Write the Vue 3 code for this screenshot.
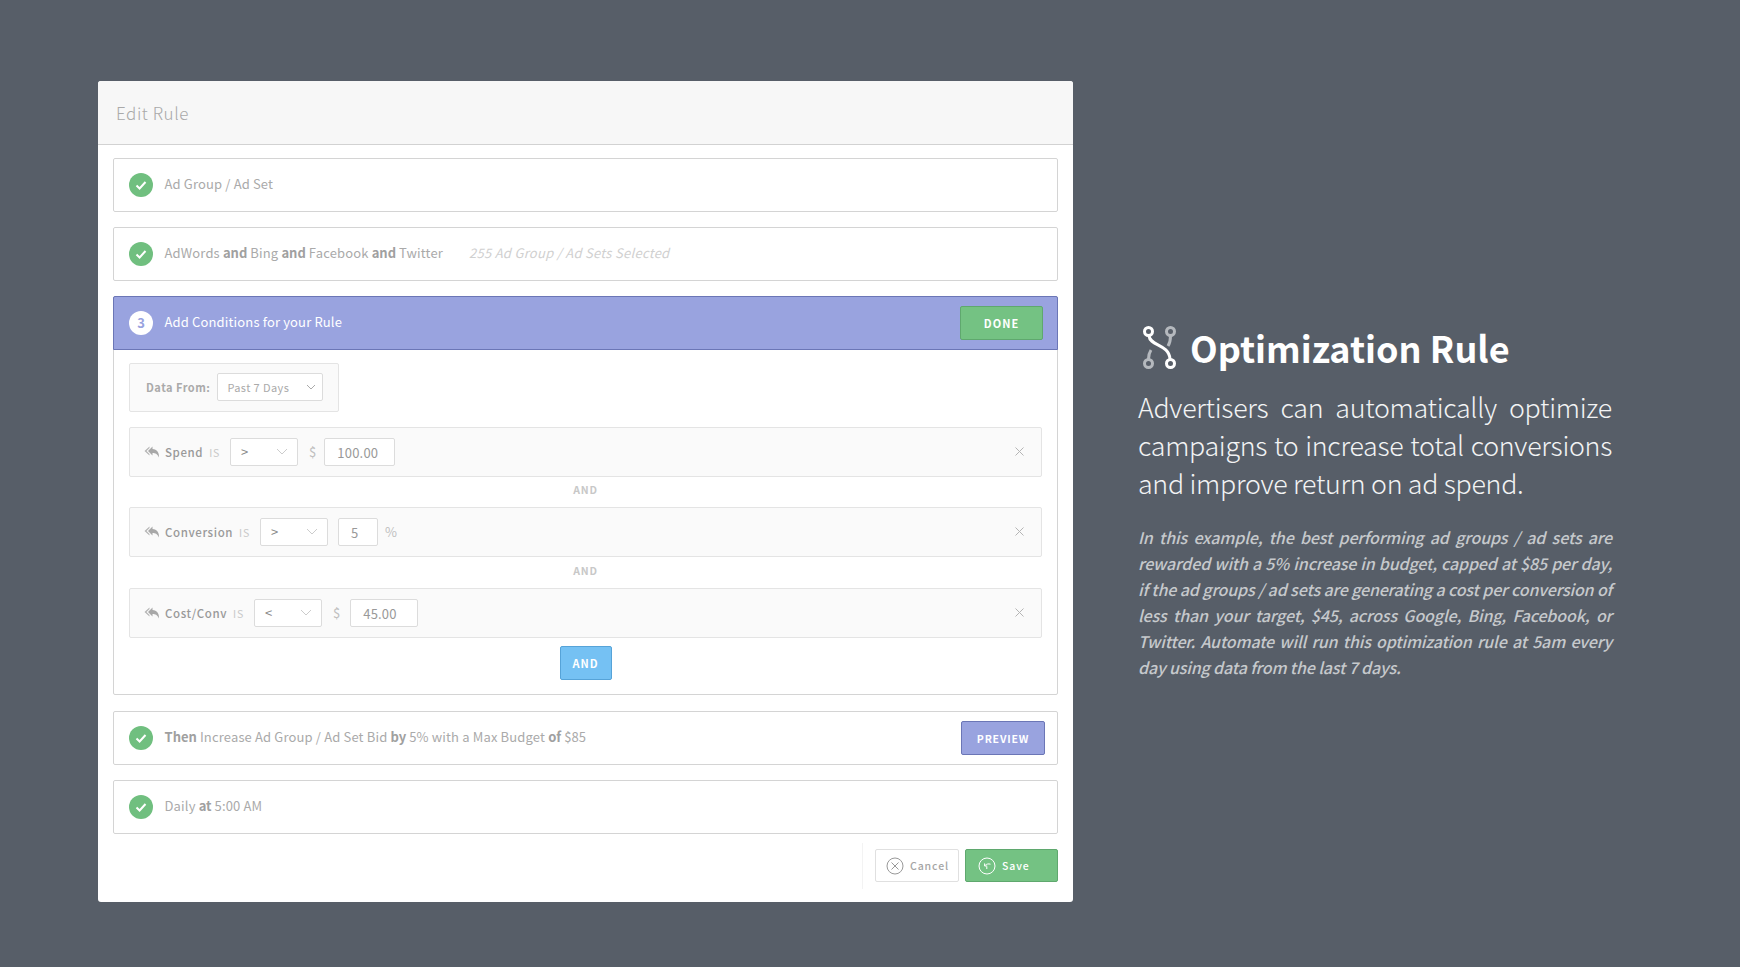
<script setup>
const conditions = [
  { name: 'Spend', op: '>', prefix: '$', value: '100.00', suffix: '', inputClass: 'input-wide' },
  { name: 'Conversion', op: '>', prefix: '', value: '5', suffix: '%', inputClass: 'input-small' },
  { name: 'Cost/Conv', op: '<', prefix: '$', value: '45.00', suffix: '', inputClass: 'input-mid' }
]
</script>

<template>
  <div class="page">
    <section class="modal">
      <header class="modal-head">Edit Rule</header>

      <div class="modal-body">
        <div class="step">
          <span class="check">
            <svg width="14" height="14" viewBox="0 0 14 14"><path d="M2.5 7.5 5.6 10.5 11.5 4" fill="none" stroke="#fff" stroke-width="2" /></svg>
          </span>
          <span class="step-text">Ad Group / Ad Set</span>
        </div>

        <div class="step">
          <span class="check">
            <svg width="14" height="14" viewBox="0 0 14 14"><path d="M2.5 7.5 5.6 10.5 11.5 4" fill="none" stroke="#fff" stroke-width="2" /></svg>
          </span>
          <span class="step-text">AdWords <b>and</b> Bing <b>and</b> Facebook <b>and</b> Twitter</span>
          <span class="step-note">255 Ad Group / Ad Sets Selected</span>
        </div>

        <div class="panel">
          <div class="panel-head">
            <span class="num">3</span>
            <span class="panel-title">Add Conditions for your Rule</span>
            <button class="btn btn-done">DONE</button>
          </div>
          <div class="panel-body">
            <div class="data-from">
              <span class="data-label">Data From:</span>
              <div class="select select-days">
                <span>Past 7 Days</span>
                <svg width="10" height="6" viewBox="0 0 10 6"><path d="M1 1 5 5 9 1" fill="none" stroke="#aaa" stroke-width="1" /></svg>
              </div>
            </div>

            <template v-for="(c, i) in conditions" :key="c.name">
              <div v-if="i > 0" class="and-label" :class="{ 'and-last': i === 2 }">AND</div>
              <div class="cond">
                <svg class="reply" width="16" height="13" viewBox="0 0 16 13">
                  <path d="M8.500.5 4 5l4.500 4.500V7c2.800 0 4.800.8 6.500 4.500.3-5-2-8.200-6.500-8.500Z" fill="#a8a8a8" />
                  <path d="M5.500.5.500 5l5 4.500V8L2.500 5l3-3Z" fill="#b4b4b4" />
                </svg>
                <span class="cond-name">{{ c.name }}</span>
                <span class="cond-is">IS</span>
                <div class="select select-op">
                  <span>{{ c.op }}</span>
                  <svg width="12" height="7" viewBox="0 0 12 7"><path d="M1 1 6 6l5-5" fill="none" stroke="#ccc" stroke-width="1" /></svg>
                </div>
                <span v-if="c.prefix" class="affix affix-pre">{{ c.prefix }}</span>
                <div class="input" :class="c.inputClass">{{ c.value }}</div>
                <span v-if="c.suffix" class="affix affix-post">{{ c.suffix }}</span>
                <svg class="remove" width="9" height="9" viewBox="0 0 9 9"><path d="M.5.5l8 8M8.500.5l-8 8" stroke="#b5b5b5" stroke-width="1" /></svg>
              </div>
            </template>

            <button class="btn btn-and">AND</button>
          </div>
        </div>

        <div class="step step-then">
          <span class="check">
            <svg width="14" height="14" viewBox="0 0 14 14"><path d="M2.5 7.5 5.6 10.5 11.5 4" fill="none" stroke="#fff" stroke-width="2" /></svg>
          </span>
          <span class="step-text"><b>Then</b> Increase Ad Group / Ad Set Bid <b>by</b> 5% with a Max Budget <b>of</b> $85</span>
          <button class="btn btn-preview">PREVIEW</button>
        </div>

        <div class="step">
          <span class="check">
            <svg width="14" height="14" viewBox="0 0 14 14"><path d="M2.5 7.5 5.6 10.5 11.5 4" fill="none" stroke="#fff" stroke-width="2" /></svg>
          </span>
          <span class="step-text">Daily <b>at</b> 5:00 AM</span>
        </div>

        <footer class="modal-foot">
          <span class="foot-divider"></span>
          <button class="foot-btn cancel">
            <svg width="18" height="18" viewBox="0 0 18 18">
              <circle cx="9" cy="9" r="8" fill="none" stroke="#999" stroke-width="1" />
              <path d="M5.500 5.500l7 7M12.500 5.500l-7 7" stroke="#999" stroke-width="1" />
            </svg>
            Cancel
          </button>
          <button class="foot-btn save">
            <svg width="18" height="18" viewBox="0 0 18 18">
              <circle cx="9" cy="9" r="8" fill="none" stroke="#fff" stroke-width="1" />
              <path d="M12.500 7.200C10.500 6.600 8.500 7 7.200 8.300M6.600 6.400V9H9.200M8.800 9.500v2.500" fill="none" stroke="#fff" stroke-width="1" />
            </svg>
            Save
          </button>
        </footer>
      </div>
    </section>

    <aside class="info">
      <div class="info-head">
        <svg class="rule-icon" width="33" height="43" viewBox="0 0 33 43">
          <path d="M27.500 10c0 4-.5 7-2.500 10" fill="none" stroke="#b5b9be" stroke-width="3" />
          <path d="M5.500 33c0-4 .5-6 2.500-9" fill="none" stroke="#b5b9be" stroke-width="3" />
          <circle cx="27.500" cy="5.500" r="4" fill="none" stroke="#b5b9be" stroke-width="3" />
          <circle cx="5.500" cy="37.500" r="4" fill="none" stroke="#b5b9be" stroke-width="3" />
          <path d="M6 10c1 10 20 8 21 23" fill="none" stroke="#fff" stroke-width="3" />
          <circle cx="5.500" cy="5.500" r="4" fill="none" stroke="#fff" stroke-width="3" />
          <circle cx="27.500" cy="37.500" r="4" fill="none" stroke="#fff" stroke-width="3" />
        </svg>
        <h1>Optimization Rule</h1>
      </div>
      <p class="lead">Advertisers can automatically optimize campaigns to increase total conversions and improve return on ad spend.</p>
      <p class="detail">In this example, the best performing ad groups / ad sets are rewarded with a 5% increase in budget, capped at $85 per day, if the ad groups / ad sets are generating a cost per conversion of less than your target, $45, across Google, Bing, Facebook, or Twitter. Automate will run this optimization rule at 5am every day using data from the last 7 days.</p>
    </aside>
  </div>
</template>

<style>
html, body {
  margin: 0;
  background: #575e68;
}
</style>

<style scoped>
.page {
  box-sizing: border-box;
  width: 1740px;
  height: 967px;
  padding: 81px 0 0 98px;
  display: flex;
  align-items: flex-start;
  gap: 65px;
  background: #575e68;
  font-family: "Noto Sans CJK SC", "Noto Sans", sans-serif;
  overflow: hidden;
}

.modal {
  width: 975px;
  height: 821px;
  background: #fff;
  border-radius: 3px;
  overflow: hidden;
  flex-shrink: 0;
}

.modal-head {
  box-sizing: border-box;
  height: 64px;
  padding: 0 0 0 18px;
  display: flex;
  align-items: center;
  background: #f7f7f7;
  border-bottom: 1px solid #d2d2d2;
  color: #a9a9a9;
  font-size: 17px;
  font-weight: 300;
  letter-spacing: 0.55px;
}

.modal-body {
  padding: 13px 15px 0;
  display: flex;
  flex-direction: column;
  gap: 14.8px;
}

.step {
  box-sizing: border-box;
  height: 54px;
  padding: 0 12px 0 15px;
  display: flex;
  align-items: center;
  background: #fff;
  border: 1px solid #d4d4d4;
  border-radius: 2px;
}

.step-then {
  margin-top: 2px;
}

.check {
  width: 24px;
  height: 24px;
  border-radius: 50%;
  background: #70bf7f;
  display: flex;
  align-items: center;
  justify-content: center;
  flex-shrink: 0;
}

.step-text {
  margin-left: 11.5px;
  padding-bottom: 3px;
  color: #aaa;
  font-size: 13px;
  letter-spacing: 0.15px;
}

.step-text b {
  color: #a0a0a0;
  font-weight: 700;
  letter-spacing: 0;
}

.step-note {
  margin-left: 26px;
  padding-bottom: 2px;
  color: #d0d0d0;
  font-size: 13px;
  font-style: italic;
  letter-spacing: 0.28px;
}

.panel {
  height: 399px;
  box-sizing: border-box;
  border: 1px solid #d4d4d4;
  border-radius: 2px;
}

.panel-head {
  box-sizing: border-box;
  height: 54px;
  margin: -1px -1px 0;
  padding: 0 14px 0 15px;
  display: flex;
  align-items: center;
  background: #99a3df;
  border: 1px solid #6b76b6;
  border-radius: 2px 2px 0 0;
}

.num {
  width: 24px;
  height: 24px;
  border-radius: 50%;
  background: #fff;
  color: #99a3df;
  font-size: 13px;
  font-weight: 700;
  display: flex;
  align-items: center;
  justify-content: center;
}

.panel-title {
  margin-left: 11.5px;
  padding-bottom: 2px;
  color: #fff;
  font-size: 13px;
  letter-spacing: 0.15px;
}

.btn {
  box-sizing: border-box;
  height: 34px;
  border-radius: 2px;
  color: #fff;
  font-family: inherit;
  font-size: 11px;
  font-weight: 700;
  letter-spacing: 1px;
  padding: 0;
}

.btn-done {
  width: 83px;
  margin-left: auto;
  background: #74c283;
  border: 1px solid #5fa86e;
}

.btn-and {
  display: block;
  width: 52px;
  margin: 8px auto 0;
  background: #75c1f3;
  border: 1px solid #56a3d8;
}

.btn-preview {
  width: 84px;
  margin-left: auto;
  background: #99a3df;
  border: 1px solid #6b76b6;
  font-size: 10.5px;
  letter-spacing: 0.8px;
}

.panel-body {
  padding: 13px 15px 0;
}

.data-from {
  box-sizing: border-box;
  width: 210px;
  height: 49px;
  padding-left: 16px;
  margin-bottom: 15px;
  display: flex;
  align-items: center;
  background: #fafafa;
  border: 1px solid #e4e4e4;
  border-radius: 2px;
}

.data-label {
  color: #aaa;
  font-size: 11px;
  font-weight: 700;
  letter-spacing: 0.5px;
}

.select {
  box-sizing: border-box;
  height: 28px;
  display: flex;
  align-items: center;
  justify-content: space-between;
  background: #fff;
  border: 1px solid #dcdcdc;
  border-radius: 2px;
  color: #aaa;
  flex-shrink: 0;
}

.select-days {
  width: 106px;
  margin-left: 7px;
  padding: 0 6px 0 9px;
  font-size: 11px;
  letter-spacing: 0.4px;
}

.select-op {
  width: 68px;
  margin-left: 10px;
  padding: 0 9px 0 10px;
  color: #888;
  font-size: 13px;
}

.cond {
  box-sizing: border-box;
  height: 50px;
  padding: 0 17px 0 14px;
  display: flex;
  align-items: center;
  background: #fafafa;
  border: 1px solid #e4e4e4;
  border-radius: 2px;
}

.reply {
  flex-shrink: 0;
  margin-top: 2px;
}

.cond-name {
  margin-left: 5px;
  padding-top: 1px;
  color: #999;
  font-size: 11.5px;
  font-weight: 500;
  letter-spacing: 0.6px;
}

.cond-is {
  margin-left: 6px;
  padding-top: 1px;
  color: #c8c8c8;
  font-size: 10.5px;
  letter-spacing: 0.8px;
}

.affix {
  color: #c0c0c0;
  font-size: 13px;
}

.affix-pre {
  margin: 0 8px 0 11px;
}

.affix-post {
  margin-left: 7px;
}

.input {
  box-sizing: border-box;
  height: 28px;
  display: flex;
  align-items: center;
  background: #fff;
  border: 1px solid #dcdcdc;
  border-radius: 2px;
  color: #999;
  font-size: 13px;
  letter-spacing: 0.2px;
}

.input-wide {
  width: 71px;
  padding: 1px 0 0 12px;
}

.input-mid {
  width: 68px;
  margin-left: 2px;
  padding: 1px 0 0 12px;
}

.input-small {
  width: 40px;
  margin-left: 10px;
  padding: 1px 0 0 12px;
}

.remove {
  margin-left: auto;
}

.and-label {
  height: 30px;
  padding-bottom: 4px;
  box-sizing: border-box;
  display: flex;
  align-items: center;
  justify-content: center;
  color: #c8c8c8;
  font-size: 10.5px;
  font-weight: 700;
  letter-spacing: 0.8px;
}

.and-last {
  height: 31px;
}

.modal-foot {
  display: flex;
  justify-content: flex-end;
  align-items: center;
  gap: 6px;
}

.foot-divider {
  width: 1px;
  height: 46px;
  margin: -6px 6px -6px 0;
  background: #f3f3f3;
}

.foot-btn {
  box-sizing: border-box;
  height: 33px;
  padding: 0 0 0 10px;
  display: flex;
  align-items: center;
  gap: 6px;
  border-radius: 2px;
  font-family: inherit;
  font-size: 10.5px;
  font-weight: 500;
  letter-spacing: 0.9px;
}

.cancel {
  width: 84px;
  background: #fff;
  border: 1px solid #e0e0e0;
  color: #a5a5a5;
}

.save {
  width: 93px;
  padding-left: 12px;
  background: #74c283;
  border: 1px solid #5fa86e;
  color: #fff;
}

.info {
  width: 474px;
  padding-top: 243px;
  color: #fff;
}

.info-head {
  display: flex;
  align-items: center;
  gap: 14px;
  padding-left: 5px;
}

.rule-icon {
  flex-shrink: 0;
}

.info-head h1 {
  margin: 0;
  color: #fff;
  font-size: 36px;
  font-weight: 700;
  line-height: 46px;
}

.lead {
  margin: 18px 0 0;
  color: #f2f3f4;
  font-size: 26.8px;
  font-weight: 300;
  letter-spacing: -0.3px;
  line-height: 38px;
  text-align: justify;
}

.detail {
  margin: 22px 0 0;
  color: #c6c9cc;
  font-size: 16px;
  font-style: italic;
  font-weight: 500;
  letter-spacing: -0.15px;
  line-height: 26px;
  text-align: justify;
}
</style>
